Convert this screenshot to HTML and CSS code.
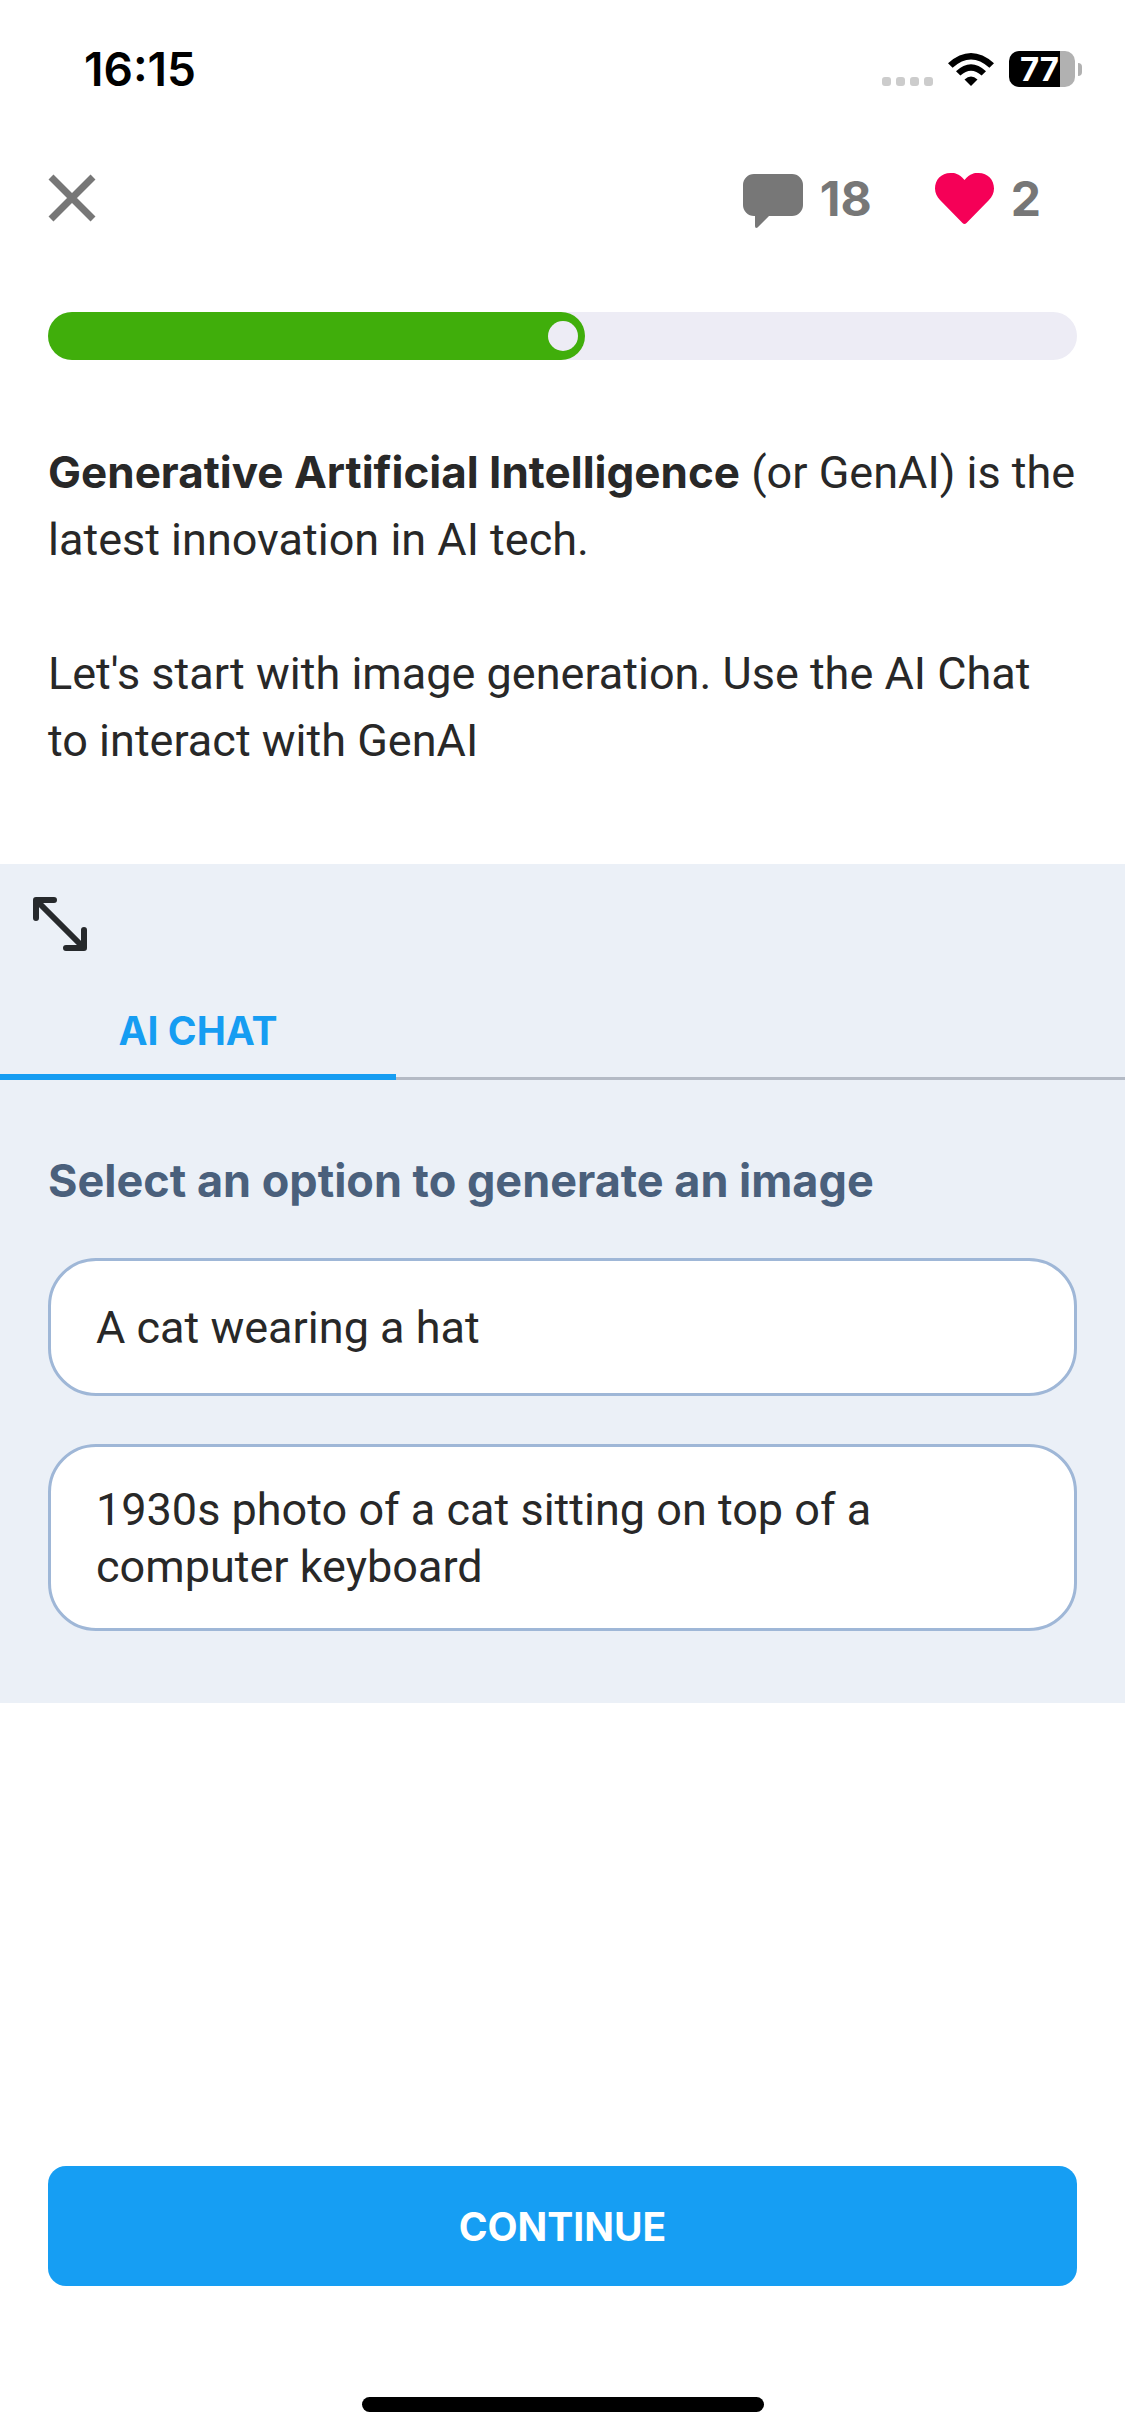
FILE: index.html
```html
<!DOCTYPE html>
<html lang="en">
<head>
    <meta charset="UTF-8">
    <meta name="viewport" content="width=device-width, initial-scale=1.0">
    <title>Generative AI lesson</title>
    <link rel="stylesheet" href="styles.css">
</head>
<body>

<div class="screen">
    <div class="status-bar">
        <span class="time">16:15</span>
        <div class="status-icons">
            <div class="signal">
                <span></span><span></span><span></span><span></span>
            </div>
            <svg class="wifi" viewBox="0 0 46 33" width="46" height="33">
                <path d="M23 33 L16.5 26.5 Q23 20.5 29.5 26.5 Z"/>
                <path d="M8 18.2 Q23 4.2 38 18.2 L33.6 22.6 Q23 13 12.4 22.6 Z"/>
                <path d="M0 10.2 Q23 -10.2 46 10.2 L41.4 14.8 Q23 -1.8 4.6 14.8 Z"/>
            </svg>
            <div class="battery">
                <div class="battery-body">77</div>
                <div class="battery-cap"></div>
            </div>
        </div>
    </div>

    <header class="top-bar">
        <button type="button" class="close" aria-label="Close">
            <svg viewBox="0 0 48 48" width="48" height="48">
                <path d="M3 3 L45 45 M45 3 L3 45" stroke="#777" stroke-width="7"/>
            </svg>
        </button>
        <div class="counters">
            <button type="button" class="counter comments" aria-label="Comments">
                <svg viewBox="0 0 60 54" width="60" height="54">
                    <path d="M11 0 H49 A11 11 0 0 1 60 11 V31 A11 11 0 0 1 49 42 H26 L14.5 53.6 Q12 54.6 12 52 V42 H11 A11 11 0 0 1 0 31 V11 A11 11 0 0 1 11 0 Z" fill="#777"/>
                </svg>
                <span>18</span>
            </button>
            <button type="button" class="counter" aria-label="Lives">
                <svg viewBox="0 0 59 51" width="59" height="51">
                    <path d="M29.5 7 C24 0 19 0 15.500 0 C6 0 0 7 0 15.500 C0 20 2 24 5 27 L27.500 50 Q29.500 52 31.500 50 L54 27 C57 24 59 20 59 15.500 C59 7 53 0 43.500 0 C40 0 35 0 29.500 7 Z" fill="#f50057"/>
                </svg>
                <span>2</span>
            </button>
        </div>
    </header>

    <div class="progress">
        <div class="progress-fill" style="width: 52.2%">
            <div class="progress-dot"></div>
        </div>
    </div>

    <div class="lesson-text">
        <p><b>Generative Artificial Intelligence</b> (or GenAI) is the latest innovation in AI tech.</p>
        <p>Let's start with image generation. Use the AI Chat to&nbsp;interact with GenAI</p>
    </div>

    <section class="chat-panel">
        <button type="button" class="expand" aria-label="Expand">
            <svg viewBox="0 0 54 54" width="54" height="54">
                <path d="M3 21 V3 H21 M33 51 H51 V33 M4 4 L50 50" fill="none" stroke="#26292c" stroke-width="6" stroke-linecap="round" stroke-linejoin="round"/>
            </svg>
        </button>
        <div class="tabs" role="tablist">
            <button type="button" class="tab" role="tab" aria-selected="true">AI CHAT</button>
        </div>
        <div class="options">
            <h2>Select an option to generate an image</h2>
            <button type="button" class="option">A cat wearing a hat</button>
            <button type="button" class="option">1930s photo of a cat sitting on top of a computer keyboard</button>
        </div>
    </section>

    <footer class="bottom">
        <button type="button" class="continue">CONTINUE</button>
        <div class="home-indicator"></div>
    </footer>
</div>

</body>
</html>
```

FILE: styles.css
```css
* {
    box-sizing: border-box;
}

body {
    margin: 0;
    background-color: #fff;
    color: #282828;
    font-family: Inter, "Liberation Sans", sans-serif;
}

button {
    padding: 0;
    border: none;
    background: none;
    color: inherit;
    font-family: inherit;
    cursor: pointer;
}

svg {
    display: block;
}

.screen {
    display: flex;
    flex-direction: column;
    min-height: 100vh;
}

.status-bar {
    display: flex;
    justify-content: space-between;
    align-items: center;
    height: 138px;
    padding: 0 43px 0 84px;
    color: #000;
}

.time {
    font-size: 46px;
    font-weight: 600;
}

.status-icons {
    display: flex;
    align-items: center;
    gap: 15px;
}

.signal {
    display: flex;
    gap: 5px;
    padding-top: 24px;
}

.signal span {
    width: 9px;
    height: 9px;
    border-radius: 3px;
    background-color: #ccc;
}

.battery {
    display: flex;
    align-items: center;
    gap: 3px;
}

.battery-body {
    width: 66px;
    height: 36px;
    padding-left: 11px;
    border-radius: 10px;
    background: linear-gradient(to right, #000 77%, #b1b1b1 77%);
    color: #fff;
    font-size: 33px;
    font-weight: 700;
    line-height: 36px;
}

.battery-cap {
    width: 4px;
    height: 13px;
    border-radius: 0 4px 4px 0;
    background-color: #b1b1b1;
}

.top-bar {
    display: flex;
    justify-content: space-between;
    align-items: center;
    height: 120px;
    padding: 0 84px 0 48px;
}

.counters {
    display: flex;
    gap: 63px;
}

.counter {
    display: flex;
    align-items: center;
    gap: 17px;
    color: #777;
    font-size: 48px;
    font-weight: 700;
}

.comments svg {
    margin-top: 6px;
}

.progress {
    height: 48px;
    margin: 54px 48px 0;
    border-radius: 24px;
    background-color: #edecf5;
}

.progress-fill {
    display: flex;
    justify-content: flex-end;
    align-items: center;
    height: 100%;
    padding-right: 7px;
    border-radius: 24px;
    background-color: #40ae0b;
}

.progress-dot {
    width: 30px;
    height: 30px;
    border-radius: 50%;
    background-color: #edecf5;
}

.lesson-text {
    padding: 79px 48px 90px;
    font-family: Roboto, "Liberation Sans", sans-serif;
    font-size: 45px;
    line-height: 67px;
}

.lesson-text p {
    margin: 0;
}

.lesson-text b {
    font-family: Inter, "Liberation Sans", sans-serif;
    font-size: 44px;
    line-height: 1;
}

.lesson-text p + p {
    margin-top: 67px;
}

.chat-panel {
    background-color: #ebf0f7;
}

.expand {
    display: block;
    margin: 33px 33px 0;
}

.tabs {
    display: flex;
    height: 129px;
    border-bottom: 3px solid #b4bac5;
}

.tab {
    width: 396px;
    height: 129px;
    padding-top: 36px;
    border-bottom: 6px solid #169df2;
    color: #169df2;
    font-size: 39px;
    font-weight: 700;
}

.options {
    display: flex;
    flex-direction: column;
    gap: 48px;
    padding: 72px 48px;
}

.options h2 {
    margin: 0;
    color: #4a607c;
    font-size: 45px;
    font-weight: 700;
    line-height: 58px;
}

.option {
    min-height: 138px;
    padding: 34px 45px 33px;
    border: 3px solid #9fb7d7;
    border-radius: 48px;
    background-color: #fff;
    font-family: Roboto, "Liberation Sans", sans-serif;
    font-size: 45px;
    line-height: 57px;
    text-align: left;
}

.bottom {
    margin-top: auto;
    padding: 0 48px 24px;
}

.continue {
    width: 100%;
    height: 120px;
    border-radius: 18px;
    background-color: #169ef3;
    color: #fff;
    font-size: 39px;
    font-weight: 700;
}

.home-indicator {
    width: 402px;
    height: 15px;
    margin: 111px auto 0;
    border-radius: 8px;
    background-color: #000;
}
```
